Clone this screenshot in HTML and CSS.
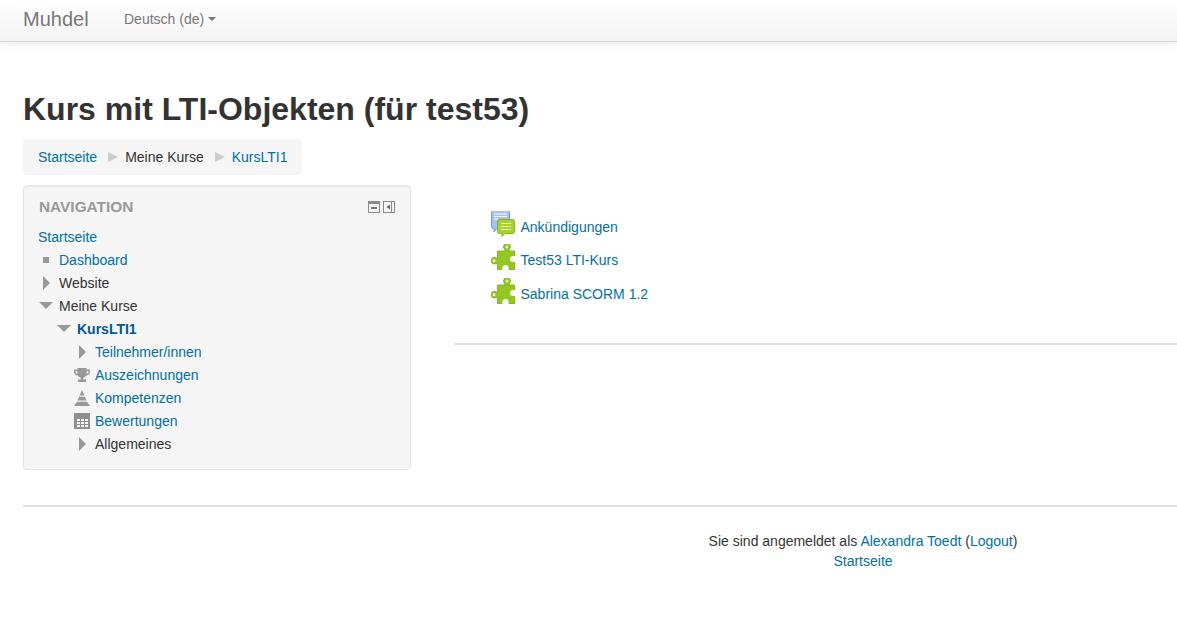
FILE: index.html
```html
<!DOCTYPE html>
<html lang="de">
<head>
<meta charset="utf-8">
<title>Kurs mit LTI-Objekten</title>
<link rel="stylesheet" href="styles.css">
</head>
<body>
<header class="navbar">
  <a class="brand">Muhdel</a>
  <a class="lang">Deutsch ‎(de)‎<span class="caret"></span></a>
</header>
<div class="page">
  <h1 class="title">Kurs mit LTI-Objekten (für test53)</h1>
  <nav class="crumbs">
    <a class="link">Startseite</a><span class="sep"></span><span>Meine Kurse</span><span class="sep"></span><a class="link">KursLTI1</a>
  </nav>
  <div class="columns">
    <aside class="block">
      <div class="block-head">
        <h2 class="block-title">NAVIGATION</h2>
        <div class="block-actions">
          <svg class="act" viewBox="0 0 12 12"><rect width="12" height="12" fill="#8a8a8a"/><rect x="1" y="3" width="10" height="8" fill="#f5f5f5"/><rect x="3" y="6" width="6" height="2" fill="#777"/></svg>
          <svg class="act" viewBox="0 0 12 12"><rect width="12" height="12" fill="#8a8a8a"/><rect x="1" y="1" width="10" height="10" fill="#f5f5f5"/><rect x="8" y="1" width="1" height="10" fill="#8a8a8a"/><path d="M7 3.500v5L3.500 6z" fill="#666"/></svg>
        </div>
      </div>
      <ul class="tree">
        <li class="row"><a class="link">Startseite</a></li>
        <li class="row lvl1"><span class="ico"><span class="bullet"></span></span><a class="link">Dashboard</a></li>
        <li class="row lvl1"><span class="ico"><span class="tri-r"></span></span><span>Website</span></li>
        <li class="row lvl1"><span class="ico"><span class="tri-d"></span></span><span>Meine Kurse</span></li>
        <li class="row lvl2"><span class="ico"><span class="tri-d"></span></span><a class="link strong">KursLTI1</a></li>
        <li class="row lvl3"><span class="ico"><span class="tri-r"></span></span><a class="link">Teilnehmer/innen</a></li>
        <li class="row lvl3"><span class="ico">
          <svg class="gly" viewBox="0 0 16 16"><path d="M3.500 1h9v1.500H16v2.500c0 2-2 3.500-4 3.800C11.300 9.800 10.300 10.300 9.300 10.500V12.500h2.700V15H4v-2.500h2.700V10.500C5.700 10.300 4.700 9.800 4 8.800 2 8.500 0 7 0 5V2.500h3.500zM1.500 4v1c0 .8.600 1.500 2 2-.2-.9-.3-2-.3-3zm13 0h-1.700c0 1-.1 2.100-.3 3 1.400-.5 2-1.200 2-2z" fill="#999"/></svg>
        </span><a class="link">Auszeichnungen</a></li>
        <li class="row lvl3"><span class="ico">
          <svg class="gly" viewBox="0 0 16 16"><path d="M8 0l2.500 5.500h-5zM5 6.800h6l1.500 3.700h-9zM3 11.800h10l3 4.200H0z" fill="#999"/></svg>
        </span><a class="link">Kompetenzen</a></li>
        <li class="row lvl3"><span class="ico">
          <svg class="gly" viewBox="0 0 16 16"><path d="M0 0h16v16H0z" fill="#8f8f8f"/><path d="M3 6h3v2H3zM7 6h3v2H7zM11 6h3v2h-3zM3 9h3v2H3zM7 9h3v2H7zM11 9h3v2h-3zM3 12h3v2H3zM7 12h3v2H7zM11 12h3v2h-3z" fill="#f5f5f5"/></svg>
        </span><a class="link">Bewertungen</a></li>
        <li class="row lvl3"><span class="ico"><span class="tri-r"></span></span><span>Allgemeines</span></li>
      </ul>
    </aside>
    <main class="content">
      <ul class="activities">
        <li class="activity">
          <svg class="act-ico" viewBox="0 1 24 26">
            <path d="M2.500 0.500h14a2 2 0 0 1 2 2v14a2 2 0 0 1-2 2H6l-3 3.500v-3.500h-.5a2 2 0 0 1-2-2v-14a2 2 0 0 1 2-2z" fill="#a3c2f5" stroke="#6f9ae0"/>
            <path d="M3 4h13M3 6.500h13M3 9h4" stroke="#fff" stroke-width="1"/>
            <path d="M8.500 9.500h13a2 2 0 0 1 2 2v10a2 2 0 0 1-2 2H14l-3 3v-3H8.500a2 2 0 0 1-2-2v-10a2 2 0 0 1 2-2z" fill="#a8d42a" stroke="#86b11c"/>
            <path d="M10 13.500h10M10 16.500h10M10 19.500h10" stroke="#eef8c8" stroke-width="1.200"/>
          </svg>
          <a class="link">Ankündigungen</a>
        </li>
        <li class="activity">
          <svg class="act-ico" viewBox="0 0 24 26">
            <path d="M6.500 7h7.300V5.500a3.400 3.400 0 1 1 4.400 0V7h5.300v19H6.500v-6.500H5a3.300 3.300 0 1 1 0-5.600h1.500z" fill="#93c722" stroke="#78a81a" stroke-width=".8"/>
            <circle cx="16" cy="3" r="1.600" fill="#dff0a8"/><circle cx="3" cy="16.700" r="1.600" fill="#dff0a8"/>
            <circle cx="22" cy="15" r="3" fill="#fff"/><path d="M22 12h2v6h-2z" fill="#fff"/>
            <circle cx="14.500" cy="24" r="3" fill="#fff"/><path d="M11.500 24h6v2.500h-6z" fill="#fff"/>
          </svg>
          <a class="link">Test53 LTI-Kurs</a>
        </li>
        <li class="activity">
          <svg class="act-ico" viewBox="0 0 24 26">
            <path d="M6.500 7h7.300V5.500a3.400 3.400 0 1 1 4.400 0V7h5.300v19H6.500v-6.500H5a3.300 3.300 0 1 1 0-5.600h1.500z" fill="#93c722" stroke="#78a81a" stroke-width=".8"/>
            <circle cx="16" cy="3" r="1.600" fill="#dff0a8"/><circle cx="3" cy="16.700" r="1.600" fill="#dff0a8"/>
            <circle cx="22" cy="15" r="3" fill="#fff"/><path d="M22 12h2v6h-2z" fill="#fff"/>
            <circle cx="14.500" cy="24" r="3" fill="#fff"/><path d="M11.500 24h6v2.500h-6z" fill="#fff"/>
          </svg>
          <a class="link">Sabrina SCORM 1.2</a>
        </li>
      </ul>
      <hr class="rule">
    </main>
  </div>
  <hr class="rule foot-rule">
  <footer class="footer">
    <div>Sie sind angemeldet als <a class="link">Alexandra Toedt</a> (<a class="link">Logout</a>)</div>
    <div><a class="link">Startseite</a></div>
  </footer>
</div>
</body>
</html>
```
FILE: styles.css
```css
* { box-sizing: border-box; }
html, body { margin: 0; padding: 0; }
body { font: 14px/20px "Liberation Sans", Arial, sans-serif; color: #333; background: #fff; overflow: hidden; height: 637px; }
.link { color: #0070a8; text-decoration: none; }
.strong { font-weight: 700; color: #005a94; }
.navbar { height: 42px; display: flex; align-items: center; padding: 0 0 4px 23px; background: linear-gradient(#fff, #f2f2f2); border-bottom: 1px solid #d4d4d4; box-shadow: 0 1px 10px rgba(0,0,0,.1); }
.brand { font-size: 20px; color: #777; width: 101px; }
.lang { color: #777; font-size: 14px; display: flex; align-items: center; }
.caret { width: 0; height: 0; margin-left: 4px; border: 4px solid transparent; border-top-color: #777; border-bottom: 0; }
.page { padding-left: 23px; }
.title { margin: 0; padding-top: 47px; font-size: 32px; line-height: 40px; font-weight: 700; color: #333; }
.crumbs { display: inline-flex; align-items: center; margin-top: 10px; height: 36px; padding: 0 14px 0 15px; background: #f5f5f5; border-radius: 4px; }
.sep { width: 0; height: 0; margin: 0 7px 0 11px; border-style: solid; border-width: 5px 0 5px 10px; border-color: transparent transparent transparent #ccc; }
.columns { display: flex; margin-top: 10px; }
.block { width: 388px; height: 285px; flex: none; background: #f5f5f5; border: 1px solid #e3e3e3; border-radius: 4px; padding: 8px 15px 0 14px; box-shadow: inset 0 1px 1px rgba(0,0,0,.05); }
.block-head { display: flex; justify-content: space-between; align-items: center; height: 26px; padding-left: 1px; }
.block-title { margin: 0; font-size: 15.400px; line-height: 26px; font-weight: 700; color: #999; }
.block-actions { display: flex; gap: 3px; }
.act { width: 12px; height: 12px; display: block; }
.tree { list-style: none; margin: 5px 0 0; padding: 0; }
.row { display: flex; align-items: center; height: 23px; }
.ico { width: 16px; margin-right: 5px; flex: none; display: flex; justify-content: center; align-items: center; }
.lvl1 { padding-left: 0; }
.lvl2 { padding-left: 18px; }
.lvl3 { padding-left: 36px; }
.bullet { width: 6px; height: 6px; background: #999; }
.tri-r { width: 0; height: 0; border-style: solid; border-width: 7px 0 7px 7px; border-color: transparent transparent transparent #999; }
.tri-d { width: 0; height: 0; border-style: solid; border-width: 7px 7px 0; border-color: #999 transparent transparent; }
.gly { width: 16px; height: 16px; display: block; }
.content { flex: 1; margin-left: 43px; }
.activities { list-style: none; margin: 0; padding: 25px 0 0 37px; height: 158px; }
.activity { display: flex; align-items: center; gap: 5.500px; height: 33.500px; }
.act-ico { width: 24px; height: 26px; flex: none; margin-bottom: 6px; }
.rule { margin: 0; border: 0; border-top: 2px solid #e0e0e0; }
.foot-rule { margin-top: 35px; }
.footer { padding: 24px 0 0 584px; width: 1096px; text-align: center; }
```
